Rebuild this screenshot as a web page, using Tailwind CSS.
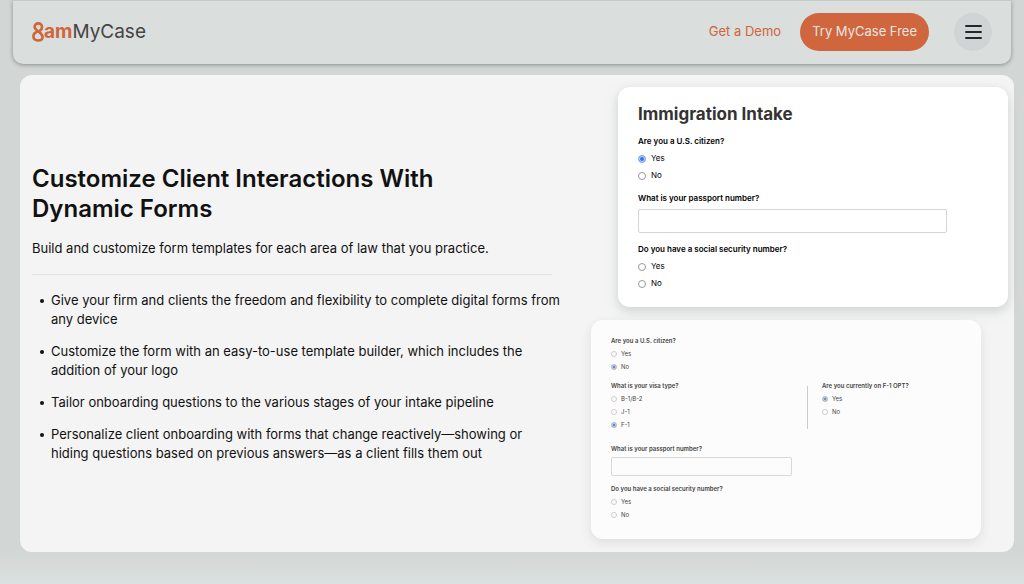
<!DOCTYPE html>
<html lang="en">
<head>
  <meta charset="UTF-8" />
  <meta name="viewport" content="width=device-width, initial-scale=1" />
  <title>MyCase - Dynamic Forms</title>
  <script src="https://cdn.jsdelivr.net/npm/@tailwindcss/browser@4"></script>
</head>
<body class="min-h-screen overflow-x-hidden bg-[#d2d7d5] font-['Inter',sans-serif] text-[#111] flex flex-col">

<header class="mx-[13px] h-16 shrink-0 pl-[19px] pr-[19px] pb-0.5 flex items-center justify-between bg-[#dadedd] border-t border-[#c5c9c8] rounded-b-[10px] shadow-[0_1px_4px_rgba(0,0,0,0.35)]">
  <a href="#" class="flex items-center" aria-label="8am MyCase">
    <svg class="w-3 h-5" viewBox="0 0 12 20" fill="none" stroke="#d0643b" stroke-width="2.6" stroke-linecap="round" stroke-linejoin="round">
      <path d="M7.4 9C9.2 8.2 10 6.8 10 5.1C10 2.9 8.4 1.4 6.3 1.4C4.1 1.4 2.6 2.9 2.6 4.8C2.6 6.7 4 7.7 6 9.3C8.6 11.4 10.6 12.6 10.6 15C10.6 17.2 8.6 18.5 6 18.5C3.3 18.5 1.4 16.9 1.4 14.3C1.4 12.2 2.6 10.6 4.6 9.9" />
    </svg>
    <span class="text-[19px] leading-6 font-bold text-[#d0643b]">am</span>
    <span class="text-[19px] leading-6 text-[#444]">MyCase</span>
  </a>
  <nav class="flex items-center">
    <a href="#" class="mr-[19px] text-[13px] text-[#d0643b]">Get a Demo</a>
    <a href="#" class="mr-[25px] h-[38px] px-3 flex items-center rounded-full bg-[#d0663d] text-[13px] text-[#e9e4e1]">Try MyCase Free</a>
    <button type="button" aria-label="Menu" class="size-[38px] flex items-center justify-center rounded-full bg-[#cfd4d4]">
      <svg class="w-[17px] h-4" viewBox="0 0 17 16" stroke="#26262a" stroke-width="2.2" stroke-linecap="round">
        <path d="M1.1 2h14.8M1.1 8h14.8M1.1 14h14.8" />
      </svg>
    </button>
  </nav>
</header>

<main class="mt-[11px] ml-5 mr-[10px] pl-3 flex items-center bg-[#f4f4f4] rounded-xl">

  <section class="w-[520px] shrink text-[13px] leading-[19px]">
    <h1 class="max-w-[440px] text-2xl leading-[30px] font-semibold">Customize Client Interactions With Dynamic Forms</h1>
    <p class="mt-[15px]">Build and customize form templates for each area of law that you practice.</p>
    <hr class="mt-4 mb-4 border-[#e3e3e3]" />
    <ul class="-mr-[11px] pl-[19px] flex flex-col gap-[13px]">
      <li class="relative before:absolute before:-left-[11px] before:top-2 before:size-1 before:rounded-full before:bg-[#111]">Give your firm and clients the freedom and flexibility to complete digital forms from any device</li>
      <li class="relative before:absolute before:-left-[11px] before:top-2 before:size-1 before:rounded-full before:bg-[#111]">Customize the form with an easy-to-use template builder, which includes the addition of your logo</li>
      <li class="relative before:absolute before:-left-[11px] before:top-2 before:size-1 before:rounded-full before:bg-[#111]">Tailor onboarding questions to the various stages of your intake pipeline</li>
      <li class="relative before:absolute before:-left-[11px] before:top-2 before:size-1 before:rounded-full before:bg-[#111]">Personalize client onboarding with forms that change reactively—showing or hiding questions based on previous answers—as a client fills them out</li>
    </ul>
  </section>

  <div class="ml-auto shrink-0 pt-3 pb-[13px] pr-[6px] flex flex-col gap-[13px]">

    <!-- intake form -->
    <form class="w-[390px] h-[220px] ml-[27px] pl-5 pt-4 bg-white rounded-xl text-[8px] leading-[11px] text-black shadow-[0_4px_12px_rgba(130,150,145,0.35)]">
      <h2 class="text-[17px] leading-[22px] font-bold text-[#333]">Immigration Intake</h2>
      <fieldset class="mt-[11px]">
        <legend class="font-semibold">Are you a U.S. citizen?</legend>
        <label class="mt-[6px] flex items-center gap-[5px]"><input type="radio" name="citizen" checked class="size-2 appearance-none rounded-full border border-[#999] bg-white checked:border-[#8ab0f5] checked:bg-[#2f73ee] checked:shadow-[inset_0_0_0_1px_#c5d8fa]" />Yes</label>
        <label class="mt-[6px] flex items-center gap-[5px]"><input type="radio" name="citizen" class="size-2 appearance-none rounded-full border border-[#999] bg-white" />No</label>
      </fieldset>
      <label for="passport" class="mt-3 block font-semibold">What is your passport number?</label>
      <input id="passport" type="text" class="mt-[5px] block w-[309px] h-6 px-2 border border-[#d4d4d4] rounded-xs bg-white" />
      <fieldset class="mt-[11px]">
        <legend class="font-semibold">Do you have a social security number?</legend>
        <label class="mt-[6px] flex items-center gap-[5px]"><input type="radio" name="ssn" class="size-2 appearance-none rounded-full border border-[#999] bg-white" />Yes</label>
        <label class="mt-[6px] flex items-center gap-[5px]"><input type="radio" name="ssn" class="size-2 appearance-none rounded-full border border-[#999] bg-white" />No</label>
      </fieldset>
    </form>

    <!-- same form with the follow-up questions open -->
    <form class="w-[390px] h-[219px] pl-5 pt-4 bg-[#fcfcfc] rounded-xl text-[6px] leading-[9px] text-[#444] shadow-[0_4px_12px_rgba(0,0,0,0.09)]">
      <fieldset>
        <legend class="font-semibold">Are you a U.S. citizen?</legend>
        <label class="mt-1 flex items-center gap-1"><input type="radio" name="citizen2" class="size-[6px] appearance-none rounded-full border border-[#ccc] bg-white" />Yes</label>
        <label class="mt-1 flex items-center gap-1"><input type="radio" name="citizen2" checked class="size-[6px] appearance-none rounded-full border border-[#c5c5c5] bg-white checked:bg-[#5579b5] checked:shadow-[inset_0_0_0_1px_#c9d2e0]" />No</label>
      </fieldset>
      <div class="mt-[10px] flex">
        <fieldset class="w-[196px]">
          <legend class="font-semibold">What is your visa type?</legend>
          <label class="mt-1 flex items-center gap-1"><input type="radio" name="visa" class="size-[6px] appearance-none rounded-full border border-[#ccc] bg-white" />B-1/B-2</label>
          <label class="mt-1 flex items-center gap-1"><input type="radio" name="visa" class="size-[6px] appearance-none rounded-full border border-[#ccc] bg-white" />J-1</label>
          <label class="mt-1 flex items-center gap-1"><input type="radio" name="visa" checked class="size-[6px] appearance-none rounded-full border border-[#c5c5c5] bg-white checked:bg-[#3f78d8] checked:shadow-[inset_0_0_0_1px_#c9d2e0]" />F-1</label>
        </fieldset>
        <fieldset class="pl-[14px] border-l border-[#ccc]">
          <legend class="font-semibold">Are you currently on F-1 OPT?</legend>
          <label class="mt-1 flex items-center gap-1"><input type="radio" name="opt" checked class="size-[6px] appearance-none rounded-full border border-[#c5c5c5] bg-white checked:bg-[#5579b5] checked:shadow-[inset_0_0_0_1px_#c9d2e0]" />Yes</label>
          <label class="mt-1 flex items-center gap-1"><input type="radio" name="opt" class="size-[6px] appearance-none rounded-full border border-[#ccc] bg-white" />No</label>
        </fieldset>
      </div>
      <label for="passport2" class="mt-[15px] block font-semibold">What is your passport number?</label>
      <input id="passport2" type="text" class="mt-1 block w-[181px] h-[19px] px-1 border border-[#d9d9d9] rounded-xs bg-[#fcfcfc]" />
      <fieldset class="mt-2">
        <legend class="font-semibold">Do you have a social security number?</legend>
        <label class="mt-1 flex items-center gap-1"><input type="radio" name="ssn2" class="size-[6px] appearance-none rounded-full border border-[#ccc] bg-white" />Yes</label>
        <label class="mt-1 flex items-center gap-1"><input type="radio" name="ssn2" class="size-[6px] appearance-none rounded-full border border-[#ccc] bg-white" />No</label>
      </fieldset>
    </form>

  </div>
</main>

<div class="grow bg-linear-to-b from-[#d3d8d6] to-[#dae0df]"></div>

</body>
</html>
